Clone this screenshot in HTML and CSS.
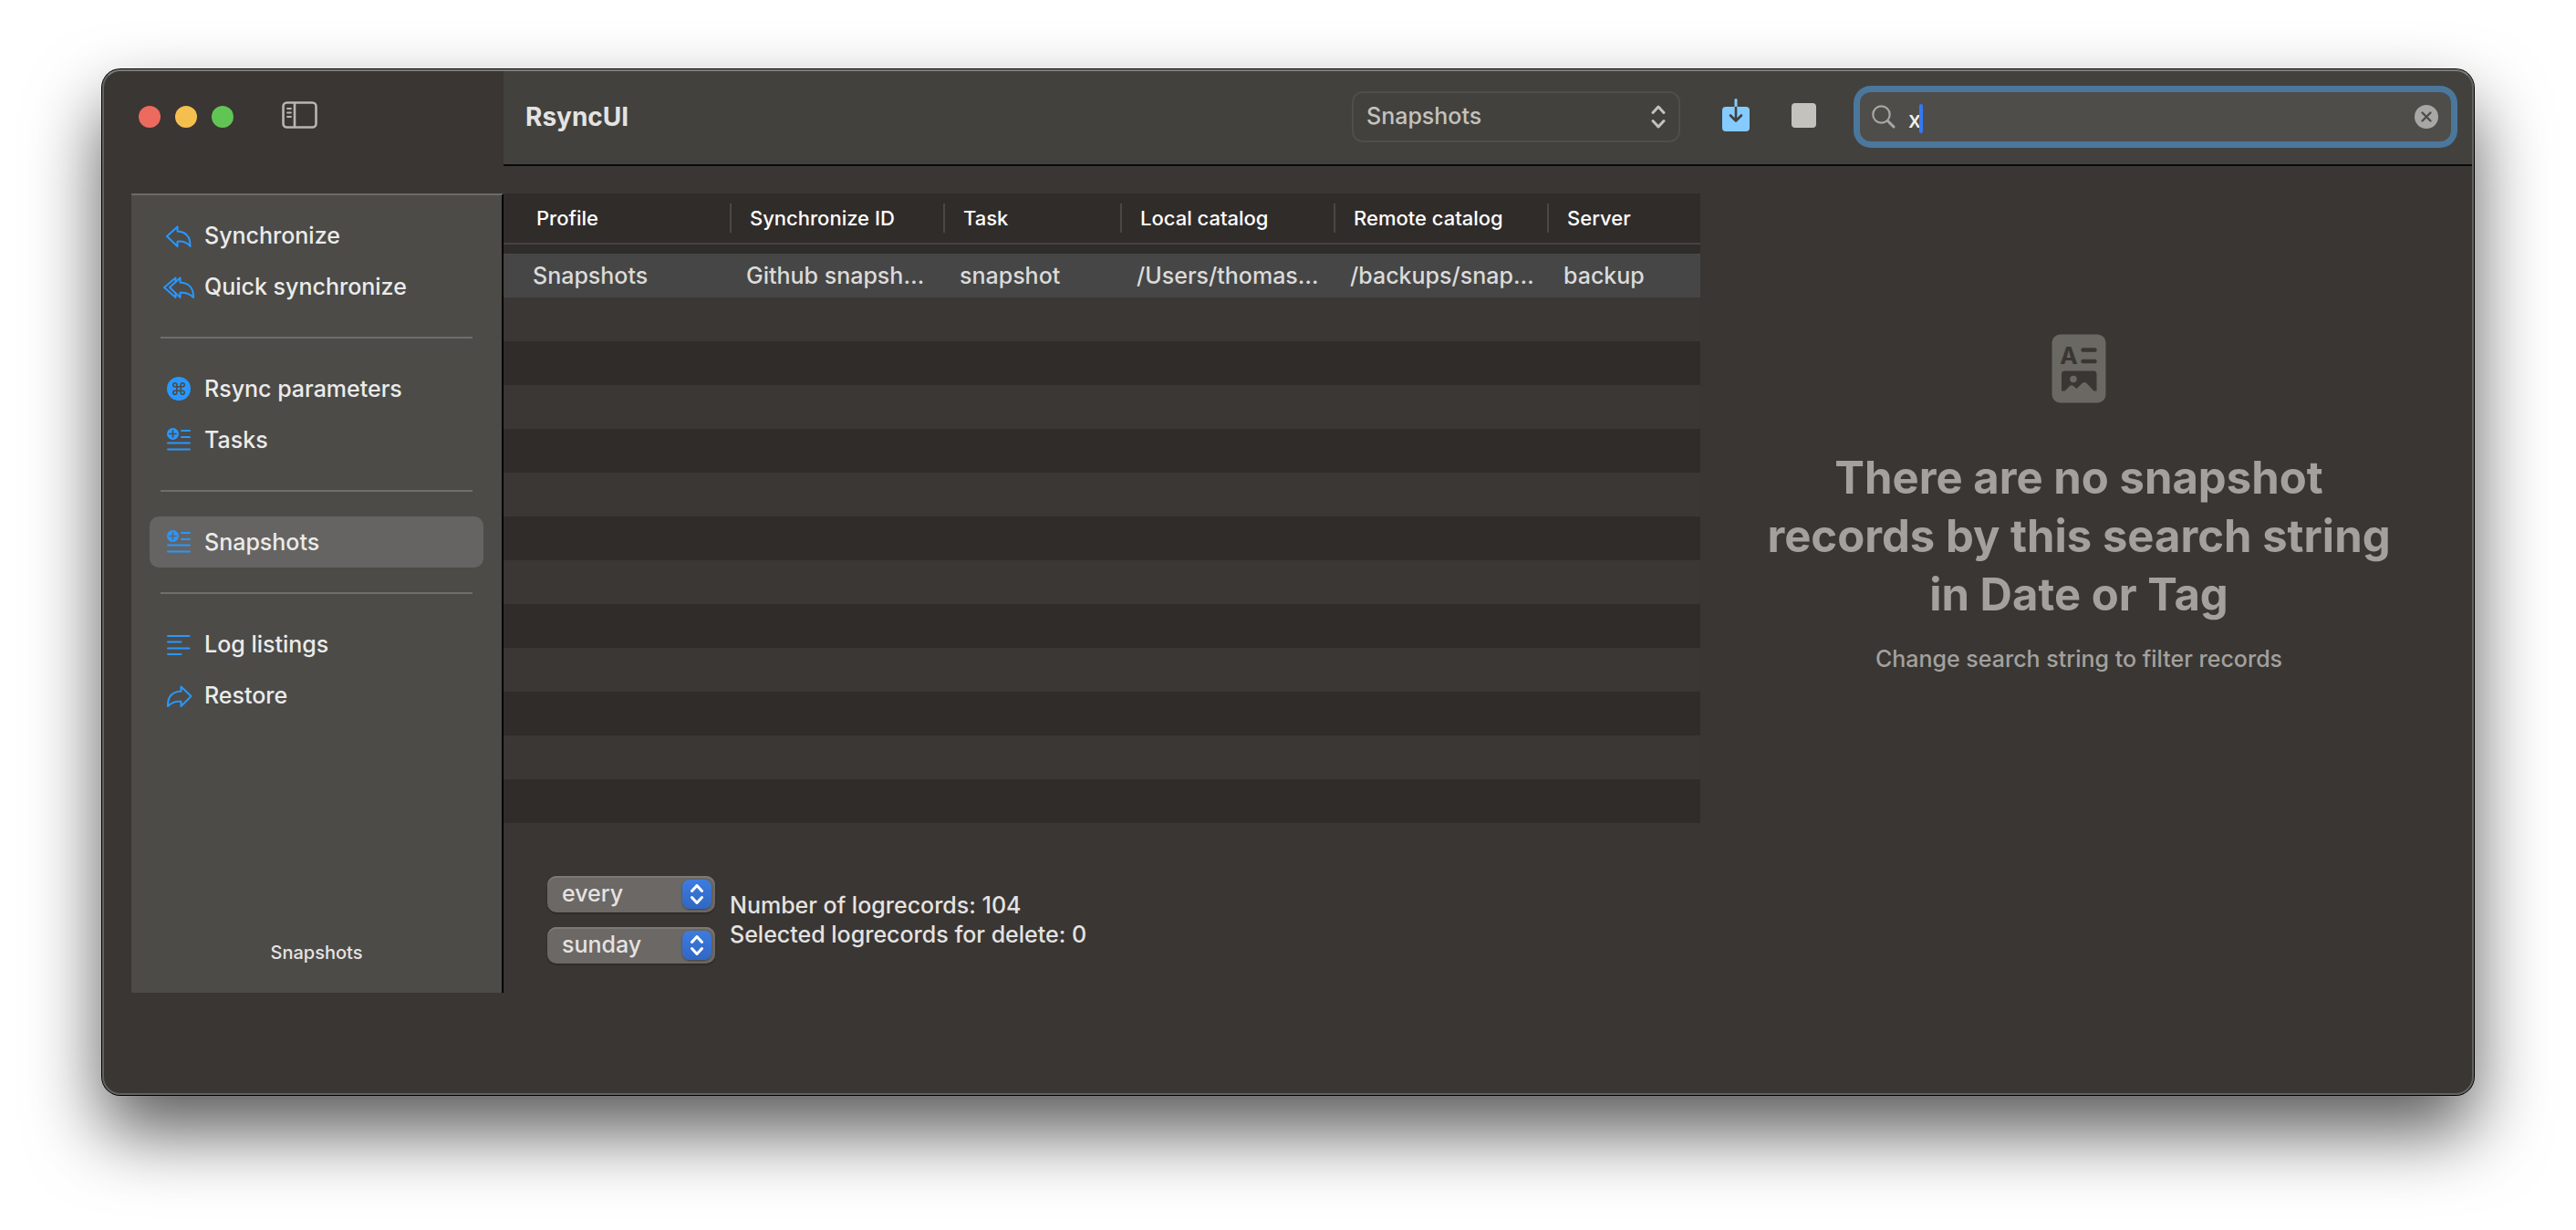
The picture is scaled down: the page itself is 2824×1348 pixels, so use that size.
FILE: index.html
```
<!DOCTYPE html>
<html lang="en">
<head>
<meta charset="utf-8">
<meta name="viewport" content="width=device-width, initial-scale=1">
<title>RsyncUI</title>
<link rel="stylesheet" href="styles.css">
</head>
<body>
<div class="window">
  <header class="titlebar">
    <div class="titlebar-left">
      <div class="lights">
        <button class="light light-close" aria-label="Close"></button>
        <button class="light light-minimize" aria-label="Minimize"></button>
        <button class="light light-zoom" aria-label="Zoom"></button>
      </div>
      <button class="icon-button sidebar-toggle" aria-label="Toggle sidebar">
        <svg width="40" height="30" viewBox="0 0 40 30" fill="none" stroke="#b9b5b1" stroke-linecap="round" aria-hidden="true">
          <rect x="1.5" y="1.5" width="36" height="27" rx="4" stroke-width="2.6"/>
          <path d="M14 2V28" stroke-width="2.6"/>
          <path d="M6 8H10M6 12.5H10M6 17H10" stroke-width="1.8"/>
        </svg>
      </button>
    </div>
    <div class="toolbar">
      <h1 class="title">RsyncUI</h1>
      <div class="select profile-select">
        <select aria-label="Profile"><option>Snapshots</option></select>
        <svg width="16" height="26" viewBox="0 0 16 26" fill="none" stroke="#c4c2bd" stroke-width="3" stroke-linecap="round" stroke-linejoin="round" aria-hidden="true"><path d="M2 8.500L8 2L14 8.500M2 17.500L8 24L14 17.500"/></svg>
      </div>
      <div class="actions">
        <button class="icon-button action" aria-label="Import">
          <svg width="30" height="36" viewBox="0 0 30 36" aria-hidden="true">
            <rect y="9" width="30" height="27" rx="4" fill="#85cbff"/>
            <path d="M15 1.500V9" stroke="#85cbff" stroke-width="3" stroke-linecap="round"/>
            <path d="M15 10V23.500M9 18.500L15 24.500L21 18.500" fill="none" stroke="#42413d" stroke-width="2.600" stroke-linecap="round" stroke-linejoin="round"/>
          </svg>
        </button>
        <button class="icon-button action" aria-label="Stop">
          <svg width="27" height="27" viewBox="0 0 27 27" aria-hidden="true"><rect width="27" height="27" rx="4" fill="#c4c2bd"/></svg>
        </button>
      </div>
      <div class="search">
        <svg width="26" height="26" viewBox="0 0 26 26" fill="none" stroke="#a8a7a5" stroke-linecap="round" aria-hidden="true"><circle cx="10.500" cy="10.500" r="9.200" stroke-width="2.200"/><path d="M17.500 17.500L24 24" stroke-width="3"/></svg>
        <div class="search-field">
          <input type="text" value="x" aria-label="Search">
          <span class="caret"></span>
        </div>
        <button class="icon-button" aria-label="Clear search">
          <svg width="26" height="26" viewBox="0 0 26 26" aria-hidden="true"><circle cx="13" cy="13" r="13" fill="#a8a7a5"/><path d="M8.500 8.500L17.500 17.500M17.500 8.500L8.500 17.500" stroke="#4e4d49" stroke-width="2.400" stroke-linecap="round"/></svg>
        </button>
      </div>
    </div>
  </header>

  <div class="content">
    <aside class="sidebar">
      <nav class="nav">
        <a class="nav-item" href="#synchronize">
          <svg class="nav-icon" viewBox="0 0 30 30" aria-hidden="true"><path d="M13.500 5.500L2 16L13.500 27V21.700C20 21.200 24 22.500 27.500 27C27.800 16.500 22.500 11 13.500 10.500Z"/></svg>
          Synchronize</a>
        <a class="nav-item" href="#quick">
          <svg class="nav-icon" viewBox="0 0 30 30" aria-hidden="true"><path d="M16.500 5.500L5 16L16.500 27V21.700C23 21.200 27 22.500 31 27C31.300 16.500 25.500 11 16.500 10.500Z"/><path d="M11.500 10V5.500L-1 16L11.500 27V22.500"/></svg>
          Quick synchronize</a>
        <hr class="nav-rule">
        <a class="nav-item" href="#parameters">
          <svg class="nav-icon" viewBox="0 0 30 30" aria-hidden="true"><circle class="solid" cx="15" cy="15" r="13"/><path class="cut thin" d="M12.800 12.800V10.800A2 2 0 1 0 10.800 12.800H19.200A2 2 0 1 0 17.200 10.800V19.200A2 2 0 1 0 19.200 17.200H10.800A2 2 0 1 0 12.800 19.200Z"/></svg>
          Rsync parameters</a>
        <a class="nav-item" href="#tasks">
          <svg class="nav-icon" viewBox="0 0 30 30" aria-hidden="true"><circle class="solid" cx="8.500" cy="8.500" r="6.500"/><path class="cut thin" d="M8.500 4.800V12.200M4.800 8.500H12.200"/><path d="M18 5H27M18 12H27M3 18.500H27M3 25.500H27"/></svg>
          Tasks</a>
        <hr class="nav-rule">
        <a class="nav-item selected" href="#snapshots" aria-current="page">
          <svg class="nav-icon" viewBox="0 0 30 30" aria-hidden="true"><circle class="solid" cx="8.500" cy="8.500" r="6.500"/><path class="cut thin" d="M8.500 4.800V12.200M4.800 8.500H12.200"/><path d="M18 5H27M18 12H27M3 18.500H27M3 25.500H27"/></svg>
          Snapshots</a>
        <hr class="nav-rule">
        <a class="nav-item" href="#logs">
          <svg class="nav-icon" viewBox="0 0 30 30" aria-hidden="true"><path d="M3 6H26.500M3 12.500H17.500M3 19.500H26.500M3 26H17.500"/></svg>
          Log listings</a>
        <a class="nav-item" href="#restore">
          <svg class="nav-icon" viewBox="0 0 30 30" aria-hidden="true"><path d="M17.500 5.500L28.500 16L17.500 27V21.700C11 21.200 7 22.500 3 27C2.700 16.500 8 11 17.500 10.500Z"/></svg>
          Restore</a>
      </nav>
      <p class="sidebar-status">Snapshots</p>
    </aside>

    <main class="main">
      <section class="records">
        <table class="tasks">
          <colgroup><col class="col-first"><col class="col"><col class="col-task"><col class="col"><col class="col"><col></colgroup>
          <thead>
            <tr><th><div>Profile</div></th><th><div>Synchronize ID</div></th><th><div>Task</div></th><th><div>Local catalog</div></th><th><div>Remote catalog</div></th><th><div>Server</div></th></tr>
          </thead>
          <tbody>
            <tr class="current"><td>Snapshots</td><td>Github snapsh…</td><td>snapshot</td><td>/Users/thomas…</td><td>/backups/snap…</td><td>backup</td></tr>
            <tr><td colspan="6"></td></tr>
            <tr><td colspan="6"></td></tr>
            <tr><td colspan="6"></td></tr>
            <tr><td colspan="6"></td></tr>
            <tr><td colspan="6"></td></tr>
            <tr><td colspan="6"></td></tr>
            <tr><td colspan="6"></td></tr>
            <tr><td colspan="6"></td></tr>
            <tr><td colspan="6"></td></tr>
            <tr><td colspan="6"></td></tr>
            <tr><td colspan="6"></td></tr>
            <tr><td colspan="6"></td></tr>
          </tbody>
        </table>
        <div class="footer">
          <div class="pickers">
            <div class="select picker">
              <select aria-label="Snapshot interval"><option>every</option></select>
              <span class="stepper"><svg width="14" height="22" viewBox="0 0 14 22" aria-hidden="true"><path d="M1.500 7.500L7 1.500L12.500 7.500M1.500 14.500L7 20.500L12.500 14.500"/></svg></span>
            </div>
            <div class="select picker">
              <select aria-label="Day of week"><option>sunday</option></select>
              <span class="stepper"><svg width="14" height="22" viewBox="0 0 14 22" aria-hidden="true"><path d="M1.500 7.500L7 1.500L12.500 7.500M1.500 14.500L7 20.500L12.500 14.500"/></svg></span>
            </div>
          </div>
          <div class="counts">
            <p>Number of logrecords: 104</p>
            <p>Selected logrecords for delete: 0</p>
          </div>
        </div>
      </section>

      <section class="empty">
        <svg class="empty-icon" width="60" height="76" viewBox="0 0 60 76" aria-hidden="true">
          <rect x="0.500" y="0.500" width="59" height="75" rx="9" fill="#696862"/>
          <text class="empty-letter" x="19" y="33" text-anchor="middle">A</text>
          <path d="M34.500 17.500H47.500M34.500 30H47.500" stroke="#3a3633" stroke-width="4.500" stroke-linecap="round"/>
          <path fill="#3a3633" d="M11 44Q11 40.500 14.500 40.500H46Q49.500 40.500 49.500 44V62.500H46.500L38.500 54Q36 52 33.500 54L27.500 60L24 57Q22 55.500 20 57L14.500 62.500H11Z"/>
          <circle cx="24" cy="49.500" r="3.800" fill="#696862"/>
        </svg>
        <h2>There are no snapshot records by this search string in Date or Tag</h2>
        <p>Change search string to filter records</p>
      </section>
    </main>
  </div>
</div>
</body>
</html>
```
FILE: styles.css
```
*, *::before, *::after { box-sizing: border-box; }

body {
  margin: 0;
  min-height: 100vh;
  padding: 76px 112px 148px;
  display: flex;
  flex-direction: column;
  background: #fff;
  color: #e4e3e2;
  font-family: Inter, "Noto Sans", sans-serif;
  font-size: 25px;
  font-weight: 500;
  line-height: 32px;
}

h1, h2, p { margin: 0; }

.window {
  position: relative;
  flex: 1;
  display: flex;
  flex-direction: column;
  border-radius: 20px;
  background: #3a3633;
  box-shadow: 0 0 0 1px #000, 0 40px 80px rgba(0, 0, 0, 0.65);
}

/* Light rim drawn over the toolbar and body alike */
.window::after {
  content: "";
  position: absolute;
  inset: 0;
  border: 2px solid #64625f;
  border-top-color: #7d7c78;
  border-radius: 20px;
  pointer-events: none;
}

.titlebar { display: flex; }

.titlebar-left {
  flex: 0 0 440px;
  display: flex;
  align-items: center;
  gap: 53px;
  padding: 0 0 2px 40px;
}

.lights { display: flex; gap: 16px; }

.light {
  width: 24px;
  height: 24px;
  padding: 0;
  border: 0;
  border-radius: 50%;
}
.light-close { background: #ed6a5f; }
.light-minimize { background: #f5bf4f; }
.light-zoom { background: #61c554; }

.icon-button {
  display: flex;
  align-items: center;
  justify-content: center;
  padding: 0;
  border: 0;
  background: none;
}

.sidebar-toggle { margin-bottom: 4px; }

.toolbar {
  flex: 1;
  display: flex;
  align-items: center;
  gap: 24px;
  height: 106px;
  padding: 0 18px 0 24px;
  border-bottom: 2px solid #0b0a0a;
  border-top-right-radius: 20px;
  background: #42413d;
}

.title {
  flex: 1;
  font-size: 28px;
  font-weight: 700;
}

.select { display: grid; align-items: center; }
.select > * { grid-area: 1 / 1; }
.select > :last-child { justify-self: end; pointer-events: none; }
.select select {
  appearance: none;
  width: 100%;
  height: 100%;
  margin: 0;
  border: 0;
  background: none;
  color: inherit;
  font: inherit;
}

.profile-select {
  width: 360px;
  height: 56px;
  border: 2px solid #4f4e4a;
  border-radius: 12px;
  color: #c4c2bd;
}
.profile-select select { padding: 0 40px 2px 14px; }
.profile-select svg { margin-right: 14px; }

.actions { display: flex; }
.action { width: 74px; height: 56px; }
.action svg { margin-bottom: 4px; }

.search {
  width: 648px;
  height: 54px;
  display: flex;
  align-items: center;
  gap: 14px;
  margin: 0 7px 0 1px;
  padding: 0 14px 0 13px;
  border-radius: 12px;
  background: #4e4d49;
  box-shadow: 0 0 0 7px #4b779d;
}

.search-field { position: relative; flex: 1; }
.search-field input {
  display: block;
  width: 100%;
  height: 54px;
  padding: 6px 0 0;
  border: 0;
  outline: 0;
  background: none;
  color: #f0efee;
  font: inherit;
}
.caret {
  position: absolute;
  top: 13px;
  left: 12px;
  width: 4px;
  height: 32px;
  border-radius: 2px;
  background: #3478f6;
}

.content {
  flex: 1;
  display: flex;
  padding: 30px 18px 112px 32px;
}

.sidebar {
  flex: 0 0 408px;
  display: flex;
  flex-direction: column;
  justify-content: space-between;
  border-top: 2px solid #6b6a68;
  border-right: 2px solid #000;
  background: #4c4b48;
}

.nav { padding: 16px 20px 0; }

.nav-item {
  display: flex;
  align-items: center;
  gap: 13px;
  height: 56px;
  padding-left: 17px;
  border-radius: 10px;
  color: #ebebea;
  text-decoration: none;
  --ground: #4c4b48;
}
.nav-item.selected { background: #656462; --ground: #656462; }

.nav-icon {
  width: 30px;
  height: 30px;
  overflow: visible;
  fill: none;
  stroke: #2997ff;
  stroke-width: 2;
  stroke-linecap: round;
  stroke-linejoin: round;
}
.nav-icon .solid { fill: #2997ff; stroke: none; }
.nav-icon .cut { stroke: var(--ground); }
.nav-icon .thin { stroke-width: 1.6; }

.nav-rule {
  height: 2px;
  margin: 27px 12px;
  border: 0;
  background: #6f6e6c;
}

.sidebar-status {
  padding-bottom: 32px;
  text-align: center;
  font-size: 20px;
  line-height: 24px;
}

.main {
  flex: 1;
  display: grid;
  grid-template-columns: minmax(0, 1312fr) minmax(0, 830fr);
}

.tasks {
  width: 100%;
  table-layout: fixed;
  border-collapse: separate;
  border-spacing: 0;
  background: #302c29;
}
.col { width: 234px; }
.col-first { width: 250px; }
.col-task { width: 194px; }

.tasks th {
  height: 56px;
  padding: 0;
  border-bottom: 2px solid #46423f;
  text-align: left;
  font-size: 22px;
  font-weight: 500;
  color: #fff;
}
.tasks th div {
  padding-left: 20px;
  border-right: 2px solid #4b4744;
  white-space: nowrap;
}
.tasks th:first-child div { padding-left: 36px; }
.tasks th:last-child div { border-right: 0; }

.tasks tbody::before {
  content: "";
  display: table-row;
  height: 10px;
}
.tasks td {
  height: 48px;
  padding: 0 16px;
  overflow: hidden;
  white-space: nowrap;
  text-overflow: ellipsis;
  color: #dbdad9;
}
.tasks td:first-child { padding-left: 32px; }
.tasks tbody tr:nth-child(even) { background: #3b3734; }
.tasks .current { background: #464646; }

.footer {
  display: flex;
  align-items: center;
  gap: 16px;
  padding: 58px 48px 0;
}

.pickers { display: grid; gap: 16px; }

.picker {
  width: 184px;
  height: 40px;
  border-radius: 10px;
  background: #6c6865;
  box-shadow: inset 0 2px 0 #7d7976, 0 1px 2px rgba(0, 0, 0, 0.4);
}
.picker select { padding: 0 40px 2px 16px; }

.stepper {
  display: flex;
  align-items: center;
  justify-content: center;
  width: 32px;
  height: 32px;
  margin-right: 4px;
  border-radius: 8px;
  background: linear-gradient(#3d7ce0, #3067c3);
  box-shadow: 0 1px 2px rgba(0, 0, 0, 0.4);
}
.stepper path {
  fill: none;
  stroke: #fff;
  stroke-width: 3;
  stroke-linecap: round;
  stroke-linejoin: round;
}

.empty {
  display: flex;
  flex-direction: column;
  align-items: center;
  padding: 154px 60px 0;
  text-align: center;
  color: #a3a19e;
}
.empty h2 {
  margin: 50px 0 22px;
  font-size: 49px;
  line-height: 64px;
  font-weight: 700;
}
.empty-letter {
  fill: #3a3633;
  font-size: 26px;
  font-weight: 700;
}
```
